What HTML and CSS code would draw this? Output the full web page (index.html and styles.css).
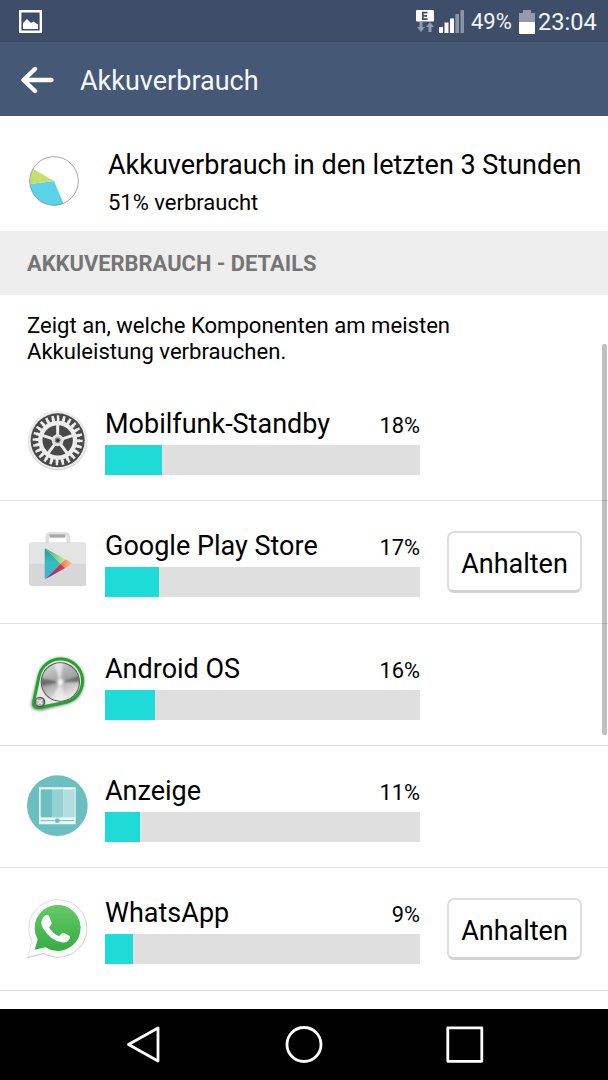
FILE: index.html
```
<!DOCTYPE html>
<html lang="de">
<head>
<meta charset="utf-8">
<title>Akkuverbrauch</title>
<link rel="stylesheet" href="styles.css">
</head>
<body>
<div class="screen">
  <div class="status">
    <svg class="shot" viewBox="0 0 23 23"><path d="M1.2 1.2h20.6v20.6H1.2z" fill="none" stroke="#fff" stroke-width="2.4"/><path d="M4 19v-6l4-4 4 4 2.5-1.5L19 14.5V19z" fill="#fff"/></svg>
    <svg class="signal" viewBox="0 0 50 26">
      <rect x="1" y="1" width="18" height="11.5" rx="1" fill="#fff"/>
      <path d="M12.500 3.600H7.800v6.500h4.800M7.800 6.800h4.200" fill="none" stroke="#3f4e68" stroke-width="1.7"/>
      <path d="M4.500 13h3v5h2.500l-4 5-4-5h2.500zM13.500 23h3v-5h2.500l-4-5-4 5h2.500z" fill="#929bad"/>
      <path d="M24 18h4v6h-4zM29.500 13.500h4V24h-4zM35 9.500h4V24h-4z" fill="#fff"/>
      <path d="M40.300 5h3.700v19h-3.700zM45.500 1h3.500v23h-3.500z" fill="#8993a7"/>
    </svg>
    <span class="charge">49%</span>
    <svg class="battery" viewBox="0 0 16 24"><path d="M4 0h8v3h4v9H0V3h4z" fill="#929bad"/><path d="M0 12h16v12H0z" fill="#fff"/></svg>
    <span class="clock">23:04</span>
  </div>
  <header class="appbar">
    <svg class="back" viewBox="0 0 34 28"><path d="M15 3 3.500 14 15 25M4 14h27.500" fill="none" stroke="#fff" stroke-width="4.400" stroke-linecap="round" stroke-linejoin="round"/></svg>
    <h1 class="title">Akkuverbrauch</h1>
  </header>
  <section class="summary">
    <svg class="pie" viewBox="0 0 50 50"><path d="M25 25 34.500 47.500A24.400 24.400 0 0 1 .8 28z" fill="#5ad3e8"/><path d="M25 25 .8 28A24.400 24.400 0 0 1 4 13z" fill="#c6df6c"/><circle cx="25" cy="25" r="24.300" fill="none" stroke="#8b8b8b" stroke-width=".8"/></svg>
    <div class="summary-text">
      <div class="headline">Akkuverbrauch in den letzten 3 Stunden</div>
      <div class="used">51% verbraucht</div>
    </div>
  </section>
  <h2 class="section">AKKUVERBRAUCH - DETAILS</h2>
  <p class="hint">Zeigt an, welche Komponenten am meisten<br>Akkuleistung verbrauchen.</p>
  <div class="list">
    <div class="row">
      <svg class="icon" viewBox="0 0 240 240">
        <circle cx="113" cy="119" r="89" fill="#d2d2d2"/><circle cx="113" cy="117" r="88" fill="#ececec"/><circle cx="113" cy="118" r="81" fill="#494949"/>
        <g fill="none" stroke="#ededed" transform="rotate(-92 113 118)">
          <circle cx="113" cy="118" r="68" stroke-width="14" pathLength="240" stroke-dasharray="4 6"/>
          <circle cx="113" cy="118" r="61" stroke-width="12" pathLength="240" stroke-dasharray="5.500 4.500" stroke-dashoffset=".7"/>
          <circle cx="113" cy="118" r="52" stroke-width="13"/>
        </g>
        <path d="M113 118V70M113 118l46-15M113 118l29 39M113 118l-29 39M113 118l-46-15" stroke="#ededed" stroke-width="9"/>
        <circle cx="113" cy="118" r="18" fill="#e2e2e2"/><circle cx="113" cy="118" r="9" fill="#888"/><circle cx="113" cy="118" r="5" fill="#333"/>
      </svg>
      <div class="usage"><div class="label"><span class="name">Mobilfunk-Standby</span><span class="pct">18%</span></div><div class="track"><div class="fill" style="width:18%"></div></div></div>
    </div>
    <div class="row">
      <svg class="icon" viewBox="0 0 240 240">
        <defs>
          <linearGradient id="playBlue" x1="0" y1="0" x2="0" y2="1"><stop offset="0" stop-color="#249aa4"/><stop offset=".5" stop-color="#35bfc0"/><stop offset="1" stop-color="#4aaad5"/></linearGradient>
          <linearGradient id="playGreen"><stop offset="0" stop-color="#35a978"/><stop offset="1" stop-color="#d5e795"/></linearGradient>
          <linearGradient id="playRed"><stop offset="0" stop-color="#6b3585"/><stop offset="1" stop-color="#e33b4e"/></linearGradient>
          <linearGradient id="playGold"><stop offset="0" stop-color="#ee7050"/><stop offset="1" stop-color="#f7c987"/></linearGradient>
        </defs>
        <path d="M82 61V41q0-8 9-8h45q9 0 9 8v20" fill="none" stroke="#dedede" stroke-width="11"/><path d="M89 34h47v10H89z" fill="#aaa"/>
        <rect x="28" y="59" width="170" height="129" rx="6" fill="#c8c8c8"/><rect x="28" y="59" width="170" height="127" rx="6" fill="#d7d7d7"/><path d="M28 122V65q0-6 6-6h158q6 0 6 6v57z" fill="#e4e4e4"/>
        <path d="M75 76 122 122 77 168q-3-1-3-5V80q0-3 1-4z" fill="url(#playBlue)"/>
        <path d="m75 76 62 33-15 13z" fill="url(#playGreen)"/><path d="m77 168 45-46 14 13z" fill="url(#playRed)"/><path d="m137 109 20 12-21 14-14-13z" fill="url(#playGold)"/>
      </svg>
      <div class="usage"><div class="label"><span class="name">Google Play Store</span><span class="pct">17%</span></div><div class="track"><div class="fill" style="width:17%"></div></div></div>
      <button class="stop">Anhalten</button>
    </div>
    <div class="row">
      <svg class="icon" viewBox="0 0 240 240">
        <defs>
          <linearGradient id="metal" x1=".2" y1="0" x2=".6" y2="1"><stop offset="0" stop-color="#d8d8d8"/><stop offset=".3" stop-color="#b5b5b5"/><stop offset=".5" stop-color="#a5a5a5"/><stop offset=".72" stop-color="#c8c8c8"/><stop offset="1" stop-color="#eee"/></linearGradient>
          <filter id="soft" x="-20%" y="-20%" width="140%" height="140%"><feGaussianBlur stdDeviation="5"/></filter>
          <filter id="sheen" x="-20%" y="-20%" width="140%" height="140%"><feGaussianBlur stdDeviation="3"/></filter>
          <clipPath id="dial"><circle cx="121" cy="111" r="56"/></clipPath>
        </defs>
        <path d="M39 175 58 92A66 66 0 1 1 142 172L64 191Q36 194 39 175z" fill="#777" stroke="#777" stroke-width="9" filter="url(#soft)"/>
        <path d="M41 172 57 94A66 66 0 1 1 141 171L62 187Q39 190 41 172z" fill="#e8e8e8" stroke="#22a52b" stroke-width="9"/>
        <circle cx="121" cy="111" r="59" fill="#555"/><circle cx="121" cy="111" r="56" fill="url(#metal)"/>
        <g clip-path="url(#dial)"><g filter="url(#sheen)"><path d="M121 111 60 99v25zM121 111l60-20v20z" fill="#555" opacity=".75"/><path d="M121 111 91 171h49zM121 111 99 50h30z" fill="#eee" opacity=".75"/><circle cx="121" cy="111" r="9" fill="#f5f5f5"/></g></g>
        <circle cx="60" cy="171" r="16" fill="#555"/><circle cx="59" cy="171" r="12" fill="#aaa"/><path d="m51 165 9 6 7-7M53 178l7-7 7 7" fill="none" stroke="#eee" stroke-width="4"/>
      </svg>
      <div class="usage"><div class="label"><span class="name">Android OS</span><span class="pct">16%</span></div><div class="track"><div class="fill" style="width:16%"></div></div></div>
    </div>
    <div class="row">
      <svg class="icon" viewBox="0 0 240 240">
        <circle cx="112" cy="116" r="91" fill="#6bbfc1"/><path d="M57 61h110v111H57z" fill="#eef9f9"/><path d="M62 67h34v84H62z" fill="#6bbfc1"/><path d="M96 67h34v84H96z" fill="#93d1d3"/><path d="M130 67h34v84h-34z" fill="#b1dfdf"/><path d="M62 161h101" stroke="#6bbfc1" stroke-width="3"/><circle cx="112" cy="161" r="7" fill="#6bbfc1"/>
      </svg>
      <div class="usage"><div class="label"><span class="name">Anzeige</span><span class="pct">11%</span></div><div class="track"><div class="fill" style="width:11%"></div></div></div>
    </div>
    <div class="row">
      <svg class="icon" viewBox="0 0 240 240">
        <defs><linearGradient id="chat" x1="0" y1="0" x2="0" y2="1"><stop offset="0" stop-color="#65ca68"/><stop offset="1" stop-color="#35ad43"/></linearGradient></defs>
        <g transform="translate(-6 1)">
          <path d="M29 202 42 153A87 86 0 1 1 78 190z" fill="#bdbdbd" stroke="#d8d8d8" stroke-width="3"/>
          <path d="M30 199 42 151A86 85 0 1 1 77 188z" fill="#fbfbfb"/>
          <path d="m50 178 9-31A69 69 0 1 1 82 171z" fill="url(#chat)"/>
          <path d="M81 75q5-3 9-1 3 1 11 23 1 5-8 14 12 20 30 27 8-10 12-11 4 0 20 10 3 3-1 10-8 12-23 9-34-6-56-42-12-21 6-39z" fill="#fff"/>
        </g>
      </svg>
      <div class="usage"><div class="label"><span class="name">WhatsApp</span><span class="pct">9%</span></div><div class="track"><div class="fill" style="width:9%"></div></div></div>
      <button class="stop">Anhalten</button>
    </div>
    <div class="row row-next"></div>
  </div>
  <nav class="nav">
    <svg viewBox="0 0 420 70"><g fill="none" stroke="#fff" stroke-width="2.800" stroke-linejoin="round"><path d="M58 19v33L28.500 35.500z"/><circle cx="204" cy="35.500" r="17"/><path d="M347.800 18.800h34v33.500h-34z"/></g></svg>
  </nav>
  <div class="scrollbar"></div>
</div>
</body>
</html>
```
FILE: styles.css
```
* { box-sizing: border-box; }
body { margin: 0; background: #fff; }
.screen { position: relative; width: 608px; height: 1080px; overflow: hidden; display: flex; flex-direction: column; background: #fff; color: #000; font-family: Roboto, "Noto Sans", sans-serif; }
h1, h2, p { margin: 0; font-weight: 400; }
svg { display: block; flex: none; }
.status { height: 42px; flex: none; display: flex; align-items: center; background: #3f4e68; color: #f2f5fb; padding: 0 11px 0 19px; }
.shot { width: 23px; height: 23px; }
.signal { width: 50px; height: 26px; margin-left: auto; margin-right: 6px; margin-top: 1px; }
.charge { width: 48px; font-size: 22px; line-height: 42px; padding-top: 2px; white-space: nowrap; }
.battery { width: 16px; height: 24px; margin-top: 1px; }
.clock { width: 59px; margin-left: 3px; font-size: 23.6px; line-height: 42px; padding-top: 2px; white-space: nowrap; }
.appbar { height: 74px; flex: none; display: flex; align-items: center; background: #455876; color: #f5f9ff; padding-left: 20px; }
.back { width: 34px; height: 28px; margin-top: 1px; }
.title { margin-left: 26px; font-size: 27px; line-height: 32px; padding-top: 3px; }
.summary { height: 115px; flex: none; display: flex; padding: 40px 0 0 29px; }
.pie { width: 50px; height: 50px; }
.summary-text { margin: -8px 0 0 29px; white-space: nowrap; }
.headline { font-size: 27px; line-height: 34px; }
.used { font-size: 22px; line-height: 26px; margin-top: 8px; }
.section { height: 64px; flex: none; background: #eee; color: #757575; padding: 1px 0 0 27px; font-size: 21.9px; font-weight: 700; line-height: 64px; }
.hint { height: 83.1px; flex: none; padding: 17px 0 0 27px; font-size: 22.1px; line-height: 26px; white-space: nowrap; }
.list { flex: 1; min-height: 0; overflow: hidden; }
.row { height: 122.3px; display: flex; align-items: flex-start; border-top: 1px solid #e2e2e2; padding: 21px 0 0 20px; }
.row:first-child { border-top-color: transparent; }
.row-next { height: 40px; }
.icon { width: 80px; height: 80px; margin-top: .5px; }
.usage { width: 315px; margin-left: 5px; padding-top: 8px; }
.label { height: 37px; display: flex; justify-content: space-between; align-items: baseline; white-space: nowrap; }
.name { font-size: 27px; line-height: 32px; }
.pct { font-size: 21.8px; line-height: 32px; }
.track { height: 30px; background: #dfdfdf; }
.fill { height: 30px; background: #1edbd7; }
.stop { width: 135px; height: 62px; margin: 9px 0 0 27px; padding: 4px 0 0; border: 2px solid #dedede; border-bottom: 3px solid #d3d3d3; border-radius: 7px; background: #fff; color: #000; font: 27px Roboto, "Noto Sans", sans-serif; }
.nav { height: 71px; flex: none; background: #000; padding-left: 100px; }
.nav svg { width: 420px; height: 70px; }
.scrollbar { position: absolute; left: 602px; top: 344px; width: 5px; height: 391px; border-radius: 2px; background: rgba(0, 0, 0, .25); }
```
